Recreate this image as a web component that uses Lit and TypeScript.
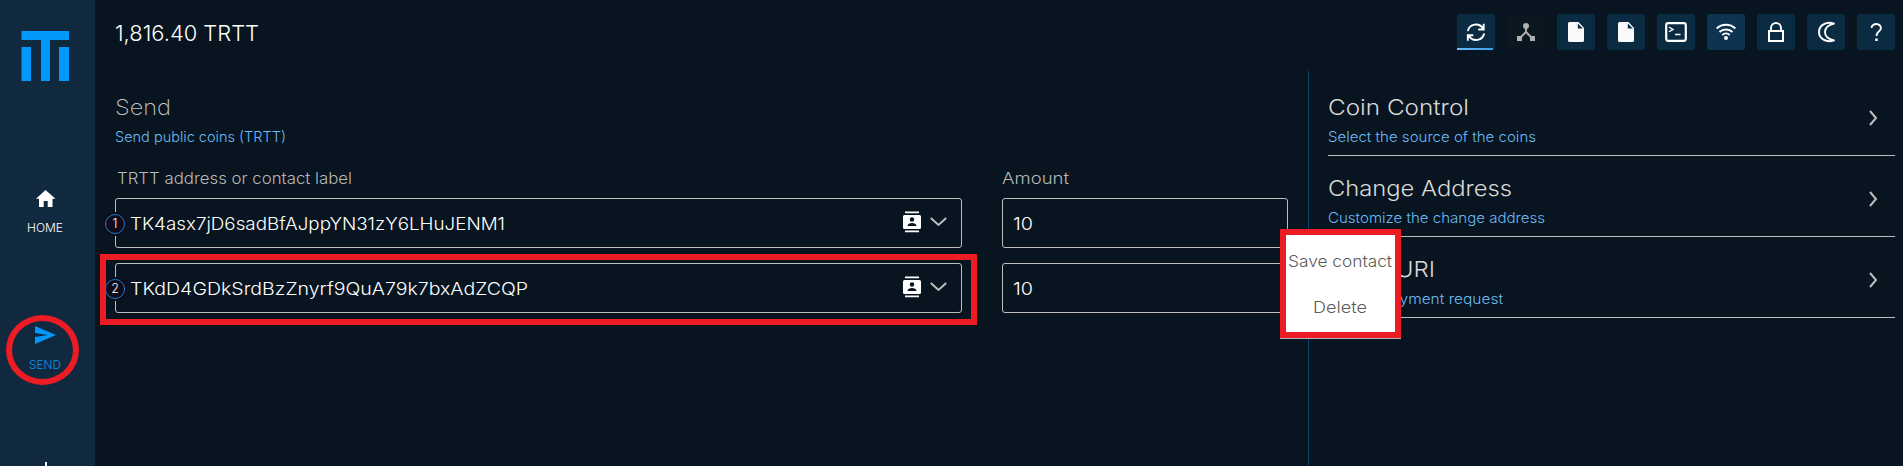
import { LitElement, html, css, svg } from "lit";
import { customElement, property } from "lit/decorators.js";

/** A single line of text whose letters are widened so that it spans a given width. */
@customElement("fit-text")
class FitText extends LitElement {
  static styles = css`
    :host { display: block; white-space: pre; }
    .t { display: inline-block; transform-origin: 0 50%; }
  `;
  @property() text = "";
  @property({ type: Number }) span = 0;
  firstUpdated() {
    const el = this.renderRoot.querySelector(".t") as HTMLElement;
    const natural = el.getBoundingClientRect().width;
    if (this.span && natural) el.style.transform = `scaleX(${this.span / natural})`;
  }
  render() { return html`<span class="t">${this.text}</span>`; }
}

const fit = (text: string, span: number, cls: string) =>
  html`<fit-text class=${cls} .text=${text} .span=${span}></fit-text>`;

const chevron = svg`<path d="M1 1l6 7-6 7" fill="none" stroke="#bdbdbd" stroke-width="2"/>`;

const doc = svg`<path d="M2.500 0h9l5.500 6v12.500a1.500 1.500 0 0 1-1.500 1.500h-13a1.500 1.500 0 0 1-1.500-1.500v-17a1.500 1.500 0 0 1 1.500-1.500z" fill="#fafafa"/><path d="M10.800 1.500v5h5z" fill="#0b2b42"/>`;

const tools = [
  { cls: "active", icon: svg`<g transform="translate(9.500 9)" fill="none" stroke="#fff" stroke-width="1.900"><path d="M1.300 8A8.300 8.300 0 0 1 16.500 5.500M17.200 .8v5.700h-5.500M17.700 10.500A8.300 8.300 0 0 1 2.500 13M1.300 17.700v-5.400h5.500"/></g>` },
  { cls: "off", icon: svg`<g fill="#b0b0b0"><circle cx="19" cy="12" r="3"/><rect x="10" y="22" width="5" height="5"/><rect x="23" y="22" width="5" height="5"/></g><path d="M19 13v5l-6 6M19 18l6 6" stroke="#b0b0b0" stroke-width="1.900" fill="none"/>` },
  { cls: "", icon: svg`<g transform="translate(10 8)">${doc}</g>` },
  { cls: "", icon: svg`<g transform="translate(10 8)">${doc}</g>` },
  { cls: "", icon: svg`<rect x="9.200" y="9.200" width="19.600" height="17.600" rx="2" fill="none" stroke="#fff" stroke-width="2.200"/><path d="M12 13l4 2.400-4 2.400M18 20.500h5.500" fill="none" stroke="#fff" stroke-width="1.300"/>` },
  { cls: "wifi", icon: svg`<g fill="none" stroke="#fff" stroke-width="2"><path d="M9.700 14.500a13.500 13.500 0 0 1 18.600 0M12.500 18a9.400 9.400 0 0 1 13 0M15.300 21a5.400 5.400 0 0 1 7.400 0"/></g><circle cx="19" cy="24" r="2" fill="#fff"/>` },
  { cls: "", icon: svg`<rect x="12" y="17" width="14" height="10" fill="none" stroke="#fff" stroke-width="2"/><path d="M14 17v-3a5 5 0 0 1 10 0v3" fill="none" stroke="#fff" stroke-width="1.900"/>` },
  { cls: "", icon: svg`<path d="M27 9.600C19 7 12 11.500 12 18s7 11 15 8.400C23 25.500 18 23 18 18s5-7.500 9-8.400z" fill="none" stroke="#fff" stroke-width="1.900" stroke-linejoin="round"/>` },
  { cls: "", icon: svg`<path d="M14.500 14a4.700 4 0 1 1 7.500 3.200c-2 1.500-2.500 2.300-2.500 4.800" fill="none" stroke="#fff" stroke-width="1.900"/><rect x="18.200" y="24.500" width="2.500" height="2.500" fill="#fff"/>` },
];

const recipients = [
  { address: "TK4asx7jD6sadBfAJppYN31zY6LHuJENM1", span: 375, amount: "10" },
  { address: "TKdD4GDkSrdBzZnyrf9QuA79k7bxAdZCQP", span: 398, amount: "10" },
];

const options = [
  { title: "Coin Control", tw: 141, sub: "Select the source of the coins", sw: 208 },
  { title: "Change Address", tw: 184, sub: "Customize the change address", sw: 217 },
  { title: "Open URI", tw: 107, sub: "From a payment request", sw: 175 },
];

@customElement("app-root")
class AppRoot extends LitElement {
  static styles = css`
    :host { display: block; font-family: Inter, "Open Sans", sans-serif; font-weight: 300; color: #fff; }
    * { box-sizing: border-box; }
    svg { display: block; flex: none; }
    .app { position: relative; display: flex; height: 466px; background: #08141f; overflow: hidden; }
    .side { width: 95px; background: #11293f; padding-top: 31px; display: flex; flex-direction: column; flex: none; }
    .logo { margin-left: 21px; }
    .nav { display: flex; flex-direction: column; }
    .home { margin-top: 109px; }
    .send { margin-top: 90px; color: #0a95f5; }
    .nav svg { margin-left: 35px; }
    .nl { font-size: 11.500px; line-height: 16px; height: 16px; }
    .home .nl { margin: 13px 0 0 27px; }
    .send .nl { margin: 13px 0 0 29px; }
    .more { margin: 89px 0 0 45px; width: 2px; height: 10px; background: #fff; }
    .body { flex: 1; display: flex; flex-direction: column; }
    .top { height: 71px; display: flex; justify-content: space-between; padding: 14px 8px 0 20px; flex: none; }
    .balance { font-size: 22px; line-height: 28px; height: 28px; padding-top: 5px; }
    .tools { display: flex; gap: 12px; }
    .tool { width: 38px; height: 36px; background: #0b2b42; border-radius: 2px; position: relative; }
    .active::after { content: ""; position: absolute; left: 0; bottom: 0; width: 36px; height: 2px; background: linear-gradient(90deg, #6cbcf5, #379ce6); }
    .off { background: #0a171f; }
    .wifi { background: #0c3350; }
    .main { flex: 1; display: flex; }
    .form { width: 1213px; padding: 22px 0 0 20px; }
    .h { font-size: 22px; line-height: 28px; height: 28px; color: #d8d8d8; }
    .dim { color: #c4c4c4; font-weight: 200; }
    .sub { font-size: 14.500px; line-height: 20px; height: 20px; color: #6cbcf5; margin-top: 6px; }
    .grid { display: grid; grid-template-columns: 847px 286px; column-gap: 40px; margin-top: 21px; }
    .lab { font-size: 16.500px; line-height: 20px; height: 20px; color: #b8b8b8; padding-left: 2px; margin-bottom: 10px; }
    .amt { padding-left: 0; }
    .field { height: 50px; border: 1px solid #bdbdbd; border-radius: 3px; display: flex; align-items: center; padding-left: 14px; position: relative; margin-bottom: 15px; }
    .val { font-size: 17.500px; line-height: 24px; flex: 1; padding-top: 1px; }
    .num { padding-left: 10px; }
    .badge { position: absolute; left: -13px; top: 13px; width: 24px; height: 24px; border-radius: 50%; background: #110b19; display: grid; place-items: center; }
    .ring { width: 20px; height: 20px; border-radius: 50%; border: 1px solid #0c82d6; display: grid; place-items: center; font-size: 12.500px; line-height: 18px; }
    .icons { display: flex; align-items: center; gap: 9px; padding: 0 14px 2px 0; }
    .opts { flex: 1; border-left: 1px solid #0a426c; padding: 0 8px 0 19px; }
    .opt { display: flex; justify-content: space-between; height: 81px; border-bottom: 1px solid #bdbdbd; padding: 18px 17px 0 0; }
    .opt:first-child { height: 85px; padding-top: 22px; }
    .opt svg { margin-top: 17px; }
    .circle { position: absolute; left: 6px; top: 315px; width: 73px; height: 70px; border: 6px solid #ed1c24; border-radius: 50%; }
    .rect { position: absolute; left: 100px; top: 254px; width: 877px; height: 71px; border: 6px solid #ed1c24; }
    .menu { position: absolute; left: 1280px; top: 229px; width: 121px; height: 109px; border: 6px solid #ed1c24; background: #fff; color: #5c5c5c; font-size: 16.500px; padding: 16px 0 0 2px; box-shadow: 0 1px 0 0 #b5b5b5; }
    .mi { line-height: 20px; height: 20px; }
    .del { margin: 26px 0 0 25px; }
  `;

  render() {
    return html`<div class="app">
      <nav class="side">
        <svg class="logo" width="48" height="50" viewBox="0 0 48 50" fill="#0598fc"><path d="M.5 0H48v9H29v41H20V9H.5zM.5 16H10v34H.5zM38 16h10v34H38z"/></svg>
        <div class="nav home">
          <svg width="21" height="17" viewBox="0 0 21 17"><path d="M10.500 0L1 8.700h3V17h4.700v-6h4v6H17.500V8.700h3z" fill="#fff"/></svg>
          ${fit("HOME", 36, "nl")}
        </div>
        <div class="nav send">
          <svg width="21" height="18" viewBox="0 0 21 18"><path d="M0 0L21 9 0 18V11l13-2L0 7z" fill="#0598fc"/></svg>
          ${fit("SEND", 32, "nl")}
        </div>
        <div class="more"></div>
      </nav>
      <div class="body">
        <header class="top">
          ${fit("1,816.40 TRTT", 144, "balance")}
          <div class="tools">
            ${tools.map((t) => html`<div class="tool ${t.cls}"><svg width="38" height="36" viewBox="0 0 38 36">${t.icon}</svg></div>`)}
          </div>
        </header>
        <div class="main">
          <section class="form">
            ${fit("Send", 56, "h dim")}
            ${fit("Send public coins (TRTT)", 171, "sub")}
            <div class="grid">
              ${fit("TRTT address or contact label", 235, "lab")}
              ${fit("Amount", 67, "lab amt")}
              ${recipients.map((r, i) => html`
                <div class="field">
                  <div class="badge"><div class="ring">${i + 1}</div></div>
                  ${fit(r.address, r.span, "val")}
                  <div class="icons">
                    <svg width="18" height="22" viewBox="0 0 18 22"><path d="M2 .5h14v1.700H2zM2 19.500h14v1.700H2zM1.500 4h15A1.500 1.500 0 0 1 18 5.500v11a1.500 1.500 0 0 1-1.500 1.500h-15A1.500 1.500 0 0 1 0 16.500v-11A1.500 1.500 0 0 1 1.500 4z" fill="#fff"/><circle cx="9" cy="8.500" r="2.200" fill="#08141f"/><path d="M4.500 15c0-4 9-4 9 0z" fill="#08141f"/></svg>
                    <svg width="17" height="10" viewBox="0 0 17 10"><path d="M.8 1l7.700 7 7.700-7" fill="none" stroke="#bdbdbd" stroke-width="2"/></svg>
                  </div>
                </div>
                <div class="field num">${fit(r.amount, 20, "val")}</div>`)}
            </div>
          </section>
          <aside class="opts">
            ${options.map((o) => html`<div class="opt">
              <div>${fit(o.title, o.tw, "h")}${fit(o.sub, o.sw, "sub")}</div>
              <svg width="9" height="16" viewBox="0 0 9 16">${chevron}</svg>
            </div>`)}
          </aside>
        </div>
      </div>
      <div class="rect"></div>
      <div class="circle"></div>
      <div class="menu">
        ${fit("Save contact", 104, "mi")}
        <div class="del">${fit("Delete", 54, "mi")}</div>
      </div>
    </div>`;
  }
}
